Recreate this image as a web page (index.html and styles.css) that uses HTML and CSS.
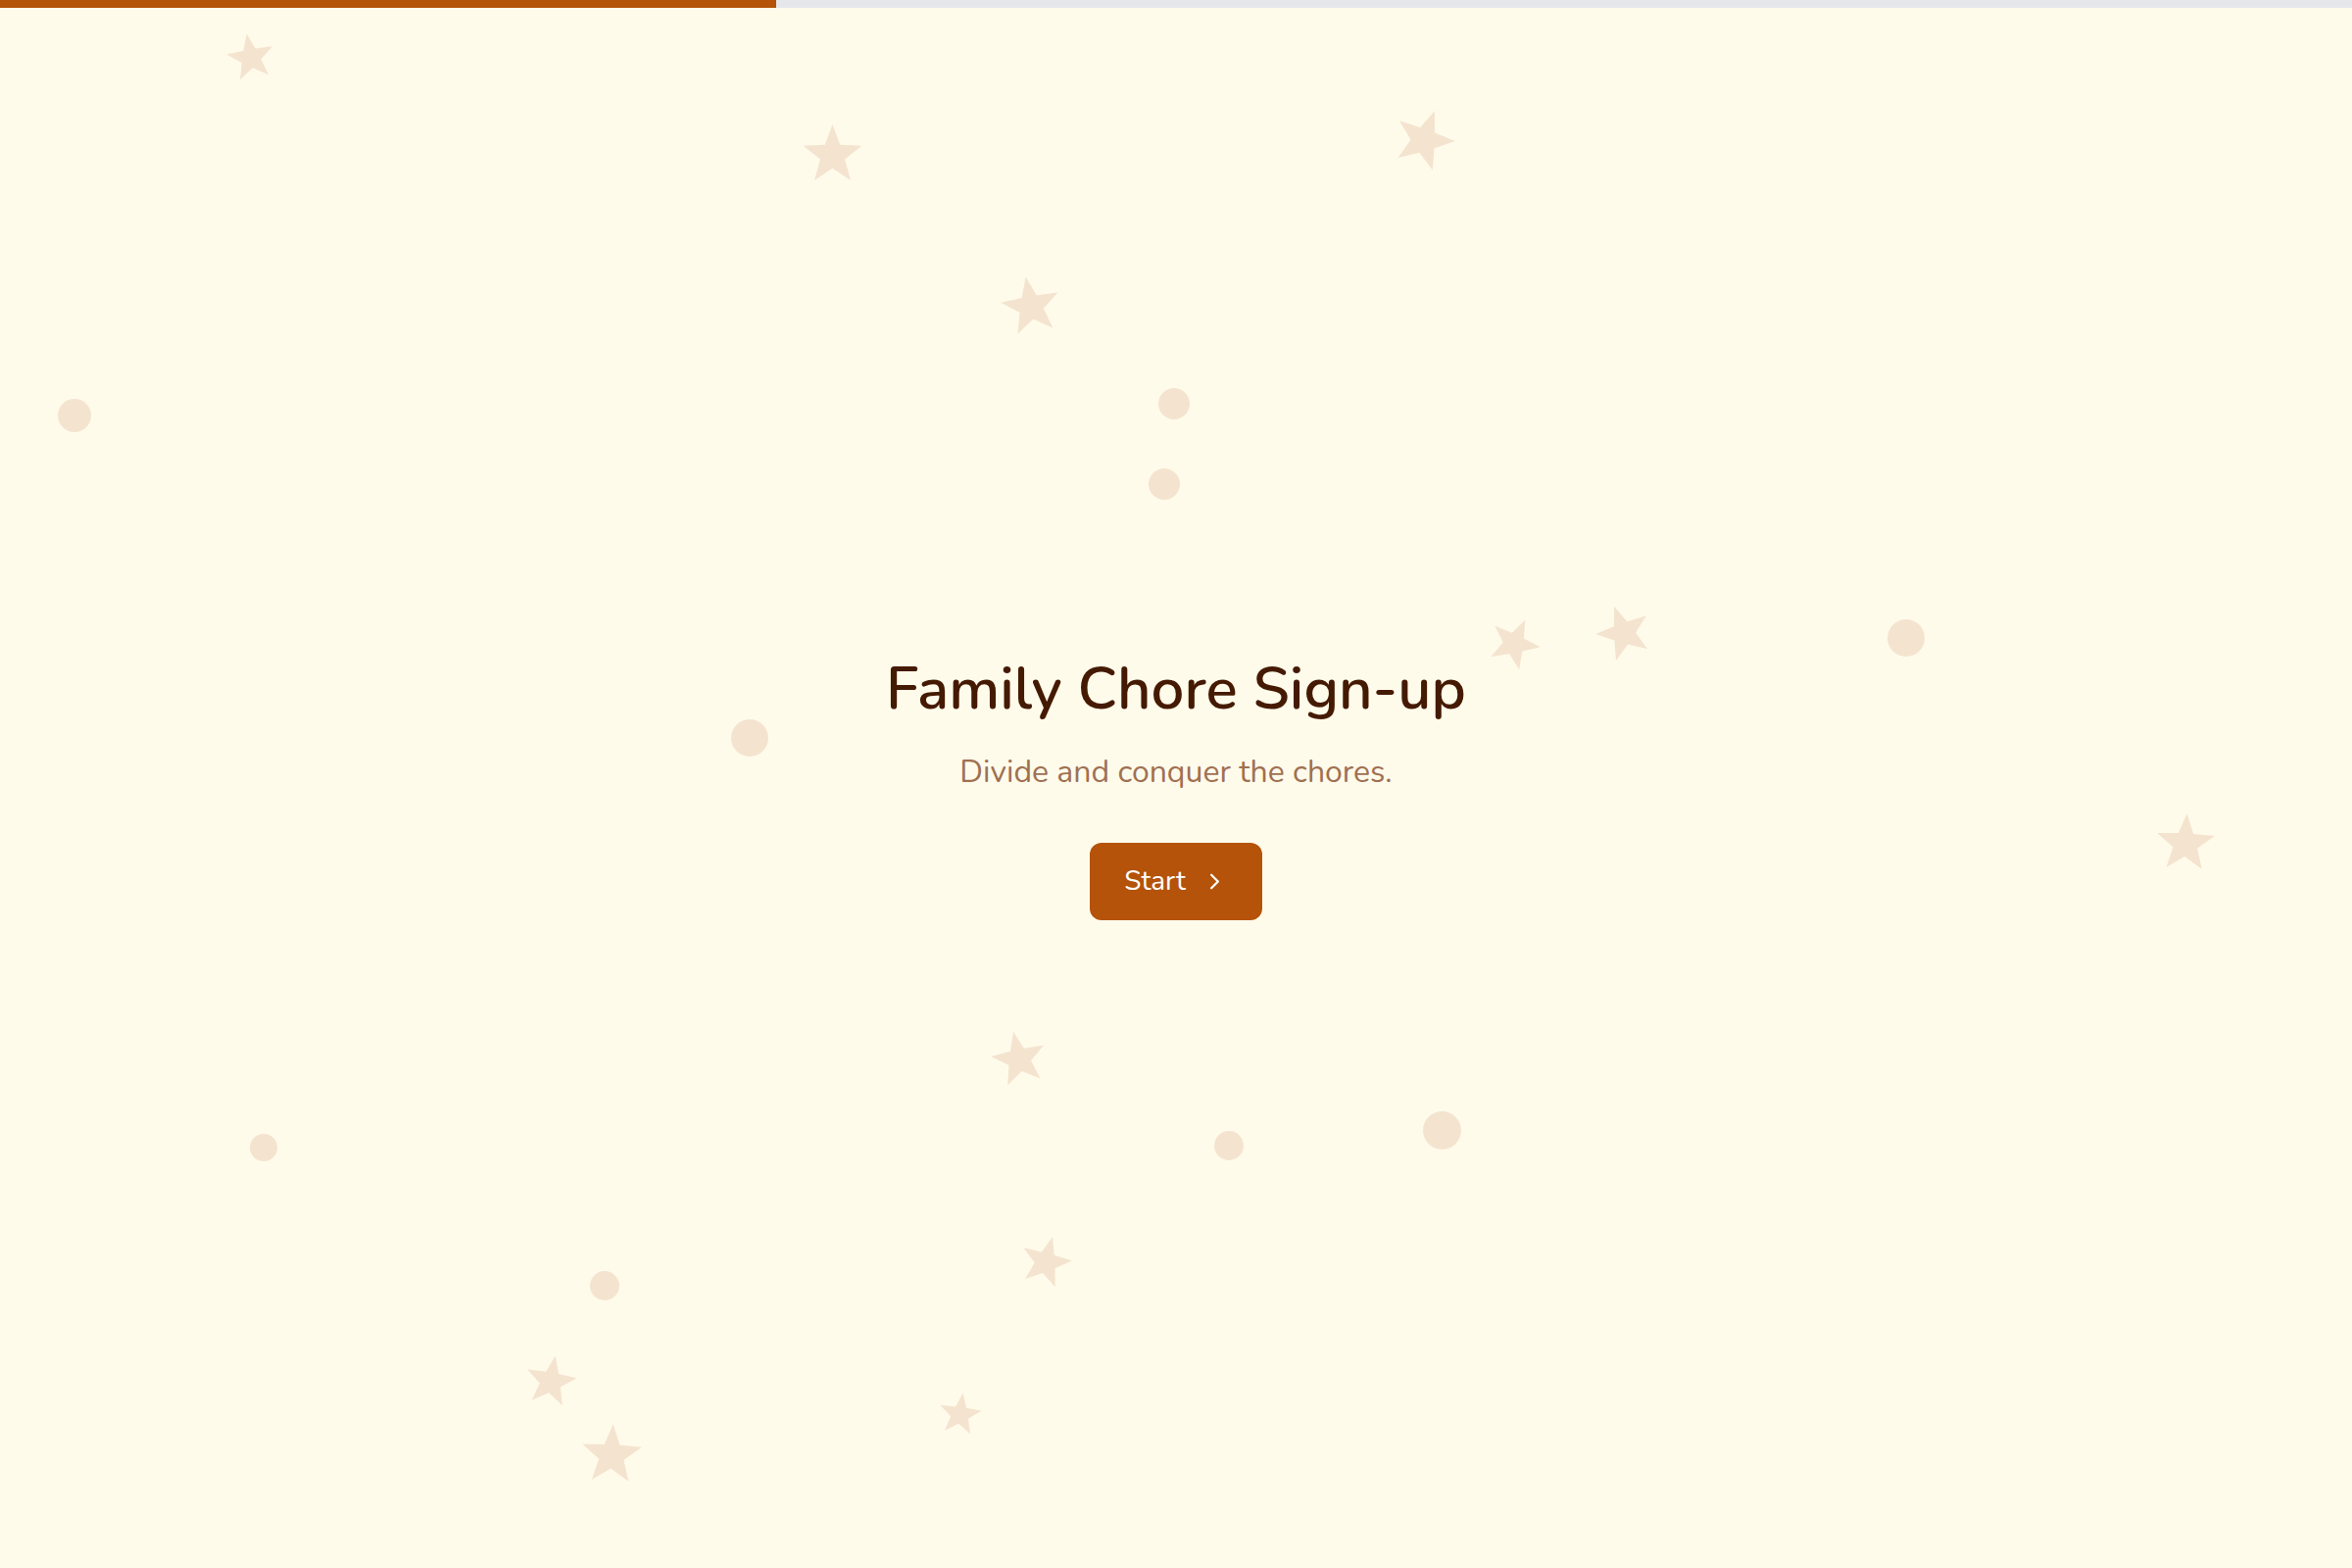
FILE: index.html
```html
<!DOCTYPE html>
<html lang="en">
<head>
    <meta charset="UTF-8">
    <meta name="viewport" content="width=device-width, initial-scale=1.0">
    <title>Family Chore Sign-up</title>
    <link rel="stylesheet" href="styles.css">
</head>
<body>
    <!-- barra de progresso -->
    <div class="progress"><div class="progress-fill"></div></div>

    <!-- estrelas e bolinhas de fundo -->
    <svg class="defs" width="0" height="0">
        <symbol id="star" viewBox="0 0 100 100">
            <polygon points="50,0 62.34,33.01 97.55,34.55 69.97,56.49 79.39,90.45 50,71 20.61,90.45 30.03,56.49 2.45,34.55 37.66,33.01"/>
        </symbol>
    </svg>
    <div class="sky">
        <svg class="star s1"><use href="#star"/></svg>
        <svg class="star s2"><use href="#star"/></svg>
        <svg class="star s3"><use href="#star"/></svg>
        <svg class="star s4"><use href="#star"/></svg>
        <svg class="star s5"><use href="#star"/></svg>
        <svg class="star s6"><use href="#star"/></svg>
        <svg class="star s7"><use href="#star"/></svg>
        <svg class="star s8"><use href="#star"/></svg>
        <svg class="star s9"><use href="#star"/></svg>
        <svg class="star s10"><use href="#star"/></svg>
        <svg class="star s11"><use href="#star"/></svg>
        <svg class="star s12"><use href="#star"/></svg>
        <span class="dot d1"></span>
        <span class="dot d2"></span>
        <span class="dot d3"></span>
        <span class="dot d4"></span>
        <span class="dot d5"></span>
        <span class="dot d6"></span>
        <span class="dot d7"></span>
        <span class="dot d8"></span>
        <span class="dot d9"></span>
    </div>

    <main class="intro">
        <h1>Family Chore Sign-up</h1>
        <p class="subtitle">Divide and conquer the chores.</p>
        <button class="start-btn">
            Start
            <svg class="chevron" viewBox="0 0 24 24" fill="none" stroke="currentColor" stroke-width="2" stroke-linecap="round" stroke-linejoin="round"><path d="m9 18 6-6-6-6"/></svg>
        </button>
    </main>
</body>
</html>
```

FILE: styles.css
```css
body {
    font-family: "Nunito", "Noto Sans", sans-serif;
    margin: 0;
    padding: 0;
    background-color: #fffbeb;
    color: #451a03;
    min-height: 100vh;
    overflow: hidden;
}

.progress {
    position: fixed;
    top: 0;
    left: 0;
    right: 0;
    height: 8px;
    background-color: #e5e7eb;
    z-index: 2;
}
.progress-fill {
    width: 33%;
    height: 100%;
    background-color: #b45309;
}

.defs {
    position: absolute;
}

.sky {
    position: absolute;
    inset: 0;
    pointer-events: none;
}
.star {
    position: absolute;
    fill: #f4e4cf;
}
.dot {
    position: absolute;
    border-radius: 50%;
    background-color: #f4e4cf;
}

.s1  { left: 231px;  top: 34px;   width: 50px; height: 50px; transform: rotate(-10deg); }
.s2  { left: 818px;  top: 127px;  width: 63px; height: 63px; }
.s3  { left: 1421px; top: 111px;  width: 64px; height: 64px; transform: rotate(20deg); }
.s4  { left: 1021px; top: 282px;  width: 62px; height: 62px; transform: rotate(-10deg); }
.s5  { left: 1518px; top: 630px;  width: 54px; height: 54px; transform: rotate(25deg); }
.s6  { left: 1628px; top: 617px;  width: 58px; height: 58px; transform: rotate(-20deg); }
.s7  { left: 2199px; top: 830px;  width: 62px; height: 62px; transform: rotate(3deg); }
.s8  { left: 1011px; top: 1052px; width: 58px; height: 58px; transform: rotate(-12deg); }
.s9  { left: 1040px; top: 1261px; width: 54px; height: 54px; transform: rotate(15deg); }
.s10 { left: 535px;  top: 1383px; width: 54px; height: 54px; transform: rotate(10deg); }
.s11 { left: 592px;  top: 1453px; width: 64px; height: 64px; transform: rotate(3deg); }
.s12 { left: 957px;  top: 1421px; width: 45px; height: 45px; transform: rotate(8deg); }

.d1 { left: 59px;   top: 407px;  width: 34px; height: 34px; }
.d2 { left: 1182px; top: 396px;  width: 32px; height: 32px; }
.d3 { left: 1172px; top: 478px;  width: 32px; height: 32px; }
.d4 { left: 746px;  top: 734px;  width: 38px; height: 38px; }
.d5 { left: 1926px; top: 632px;  width: 38px; height: 38px; }
.d6 { left: 255px;  top: 1157px; width: 28px; height: 28px; }
.d7 { left: 1239px; top: 1154px; width: 30px; height: 30px; }
.d8 { left: 1452px; top: 1134px; width: 39px; height: 39px; }
.d9 { left: 602px;  top: 1297px; width: 30px; height: 30px; }

.intro {
    position: relative;
    z-index: 1;
    min-height: 100vh;
    box-sizing: border-box;
    padding-top: 5px;
    display: flex;
    flex-direction: column;
    align-items: center;
    justify-content: center;
    text-align: center;
}
h1 {
    font-size: 60px;
    font-weight: 600;
    line-height: 72px;
    margin: 0;
    color: #451a03;
}
.subtitle {
    font-size: 32px;
    line-height: 48px;
    margin: 25px 0 0;
    color: #a07051;
}
.start-btn {
    display: flex;
    align-items: center;
    gap: 16px;
    margin-top: 48px;
    padding: 19px 35px;
    font-family: inherit;
    font-size: 28px;
    line-height: 41px;
    color: #fff;
    background-color: #b45309;
    border: none;
    border-radius: 12px;
    cursor: pointer;
}
.chevron {
    width: 27px;
    height: 27px;
}
```
